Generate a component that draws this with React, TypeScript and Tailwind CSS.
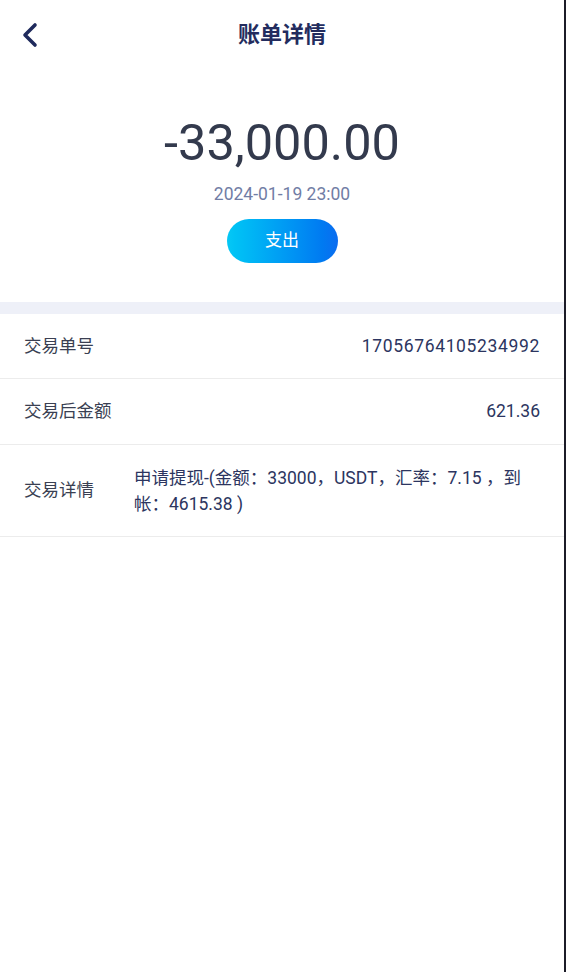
import React from "react";

export default function App() {
  return (
    <div className="flex w-[566px] h-[972px] bg-white" style={{ fontFamily: 'Roboto, "Noto Sans CJK SC", sans-serif' }}>
      <div className="flex-1 flex flex-col">
        <div className="relative h-[68px] flex items-center justify-center">
          <svg className="absolute left-[20px] top-[22px]" width="20" height="26" viewBox="0 0 20 26">
            <path d="M15 3 L5 13 L15 23" fill="none" stroke="#1f2a5c" strokeWidth="3.6" strokeLinecap="round" strokeLinejoin="round" />
          </svg>
          <span className="text-[22px] font-bold text-[#232c5e]">账单详情</span>
        </div>
        <div className="flex flex-col items-center pt-[45px] pb-[39px]">
          <div className="text-[50.5px] leading-[60px] text-[#333a4d]">-33,000.00</div>
          <div className="mt-[10px] text-[17.5px] leading-[22px] text-[#717da5]">2024-01-19 23:00</div>
          <div className="mt-[14px] w-[111px] h-[44px] rounded-full bg-gradient-to-r from-[#06c8f5] to-[#0b6cf0] flex items-center justify-center text-white text-[17px]">
            支出
          </div>
        </div>
        <div className="h-[12px] bg-[#eef0f8]" />
        <div className="flex items-center justify-between h-[65px] px-[24px] border-b border-[#ececec]">
          <span className="text-[17.5px] text-[#3a3f52]">交易单号</span>
          <span className="text-[17.5px] tracking-[0.65px] text-[#2c3560]">17056764105234992</span>
        </div>
        <div className="flex items-center justify-between h-[66px] px-[24px] border-b border-[#ececec]">
          <span className="text-[17.5px] text-[#3a3f52]">交易后金额</span>
          <span className="text-[17.5px] text-[#2c3560]">621.36</span>
        </div>
        <div className="flex items-center h-[92px] pl-[24px] pr-[26px] border-b border-[#ececec]">
          <span className="w-[110px] shrink-0 text-[17.5px] text-[#3a3f52]">交易详情</span>
          <span className="text-[17.5px] leading-[26px] text-[#2c3560]">申请提现-(金额：33000，USDT，汇率：7.15 ，到帐：4615.38 )</span>
        </div>
      </div>
      <div className="w-[2px] bg-[#1c1c28]" />
    </div>
  );
}
